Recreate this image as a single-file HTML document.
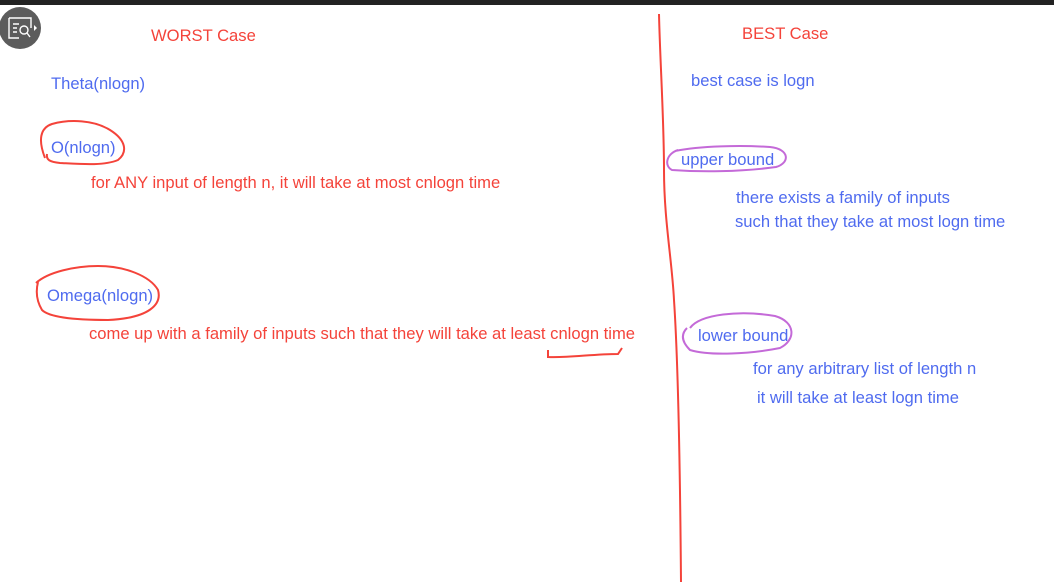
<!DOCTYPE html>
<html><head><meta charset="utf-8"><style>
body{margin:0;width:1054px;height:582px;background:#fff;position:relative;overflow:hidden;font-family:"Liberation Sans",Arial,sans-serif;font-size:16.6px}
.t{position:absolute;white-space:nowrap;line-height:18px}
.r{color:#f4433a}.b{color:#4f6bef}
</style></head><body>
<div style="position:absolute;left:0;top:0;width:1054px;height:5px;background:#222"></div>
<svg width="1054" height="582" style="position:absolute;left:0;top:0">
<circle cx="20" cy="28" r="21" fill="#5c5c5c"/>
<g stroke="#fff" stroke-width="1.4" fill="none">
<path d="M9 18h22v10M9 18v20h10"/>
<path d="M13 24h6M13 28h4M13 32h4"/>
<circle cx="24" cy="30" r="4"/>
<path d="M27 33l3 4"/>
</g>
<path d="M34 25l3 3-3 3z" fill="#fff"/>
<g fill="none" stroke="#f4433a" stroke-width="2">
<path d="M659 14C660 60 664 120 664 170C664 220 672 260 674 300C678 360 680 460 681 582"/>
<path d="M45 158C38 140 40 128 52 124C70 119 94 120 110 130C126 140 128 152 118 160C104 166 80 164 60 163C50 162 46 160 47 154"/>
<path d="M36 283C48 272 75 266 98 266C125 266 150 276 158 290C162 304 150 318 108 320C78 320 50 318 42 310C36 300 36 290 38 282"/>
<path d="M548 350v7c20 1 45-3 70-3l4-6"/>
</g>
<g fill="none" stroke="#c46ad8" stroke-width="2">
<path d="M675 151C700 146 740 145 770 147C790 149 790 163 776 167C740 172 700 172 672 170C664 166 666 154 678 150"/>
<path d="M690 328C700 314 740 310 775 316C796 322 796 340 780 348C750 354 710 356 690 350C680 340 682 333 687 328"/>
</g>
</svg>
<div class="t r" style="left:151px;top:27px">WORST Case</div>
<div class="t b" style="left:51px;top:75px">Theta(nlogn)</div>
<div class="t b" style="left:51px;top:139px">O(nlogn)</div>
<div class="t r" style="left:91px;top:174px">for ANY input of length n, it will take at most cnlogn time</div>
<div class="t b" style="left:47px;top:287px">Omega(nlogn)</div>
<div class="t r" style="left:89px;top:325px">come up with a family of inputs such that they will take at least cnlogn time</div>
<div class="t r" style="left:742px;top:25px">BEST Case</div>
<div class="t b" style="left:691px;top:72px">best case is logn</div>
<div class="t b" style="left:681px;top:151px">upper bound</div>
<div class="t b" style="left:736px;top:189px">there exists a family of inputs</div>
<div class="t b" style="left:735px;top:213px">such that they take at most logn time</div>
<div class="t b" style="left:698px;top:327px">lower bound</div>
<div class="t b" style="left:753px;top:360px">for any arbitrary list of length n</div>
<div class="t b" style="left:757px;top:389px">it will take at least logn time</div>
</body></html>
